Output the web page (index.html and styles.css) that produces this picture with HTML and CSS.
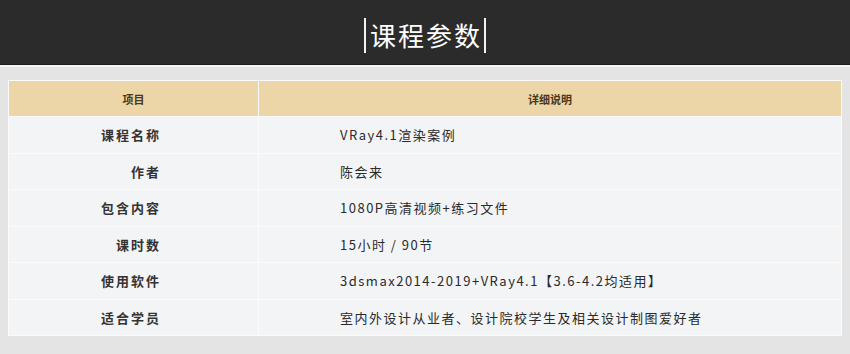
FILE: index.html
```html
<!DOCTYPE html>
<html lang="zh-CN">
<head>
<meta charset="utf-8">
<title>课程参数</title>
<link rel="stylesheet" href="styles.css">
</head>
<body>
<header class="banner">
  <h1 class="title">课程参数</h1>
</header>
<main class="content">
  <div class="params">
    <div class="cell head">项目</div>
    <div class="cell head">详细说明</div>
    <div class="cell key">课程名称</div>
    <div class="cell val">VRay4.1渲染案例</div>
    <div class="cell key">作者</div>
    <div class="cell val">陈会来</div>
    <div class="cell key">包含内容</div>
    <div class="cell val">1080P高清视频+练习文件</div>
    <div class="cell key">课时数</div>
    <div class="cell val">15小时 / 90节</div>
    <div class="cell key">使用软件</div>
    <div class="cell val">3dsmax2014-2019+VRay4.1【3.6-4.2均适用】</div>
    <div class="cell key">适合学员</div>
    <div class="cell val">室内外设计从业者、设计院校学生及相关设计制图爱好者</div>
  </div>
</main>
</body>
</html>
```

FILE: styles.css
```css
html, body {
  margin: 0;
  padding: 0;
}
body {
  background: #e4e4e4;
  font-family: "Noto Sans CJK SC", "Noto Sans", sans-serif;
  color: #333;
}
.banner {
  height: 64px;
  background: #2b2b2b;
  border-bottom: 1px solid #1c1c1c;
  box-shadow: 0 2px 0 #f4f4f4;
  display: flex;
  justify-content: center;
  align-items: flex-start;
}
.title {
  margin: 18px 0 0;
  height: 35px;
  line-height: 34px;
  padding: 0 2px 0 4px;
  border-left: 2px solid #f2f2f2;
  border-right: 2px solid #f2f2f2;
  color: #fff;
  font-size: 26px;
  font-weight: 400;
  letter-spacing: 2px;
}
.content {
  padding: 15px 8px 0;
}
.params {
  display: grid;
  grid-template-columns: 249px 1fr;
  grid-template-rows: 35px repeat(6, 35.5px);
  gap: 1px;
  padding: 1px;
  background: #fbfbfc;
}
.cell {
  display: flex;
  align-items: center;
  font-size: 13px;
  letter-spacing: 1.5px;
  background: #f3f4f6;
}
.head {
  background: #ecd5a6;
  justify-content: center;
  font-size: 11px;
  font-weight: 700;
  letter-spacing: 0;
  color: #4a3819;
}
.key {
  justify-content: flex-end;
  padding-right: 97px;
  font-weight: 700;
  letter-spacing: 2px;
  color: #333;
}
.val {
  padding-left: 81px;
  color: #2a2a2a;
}
```
